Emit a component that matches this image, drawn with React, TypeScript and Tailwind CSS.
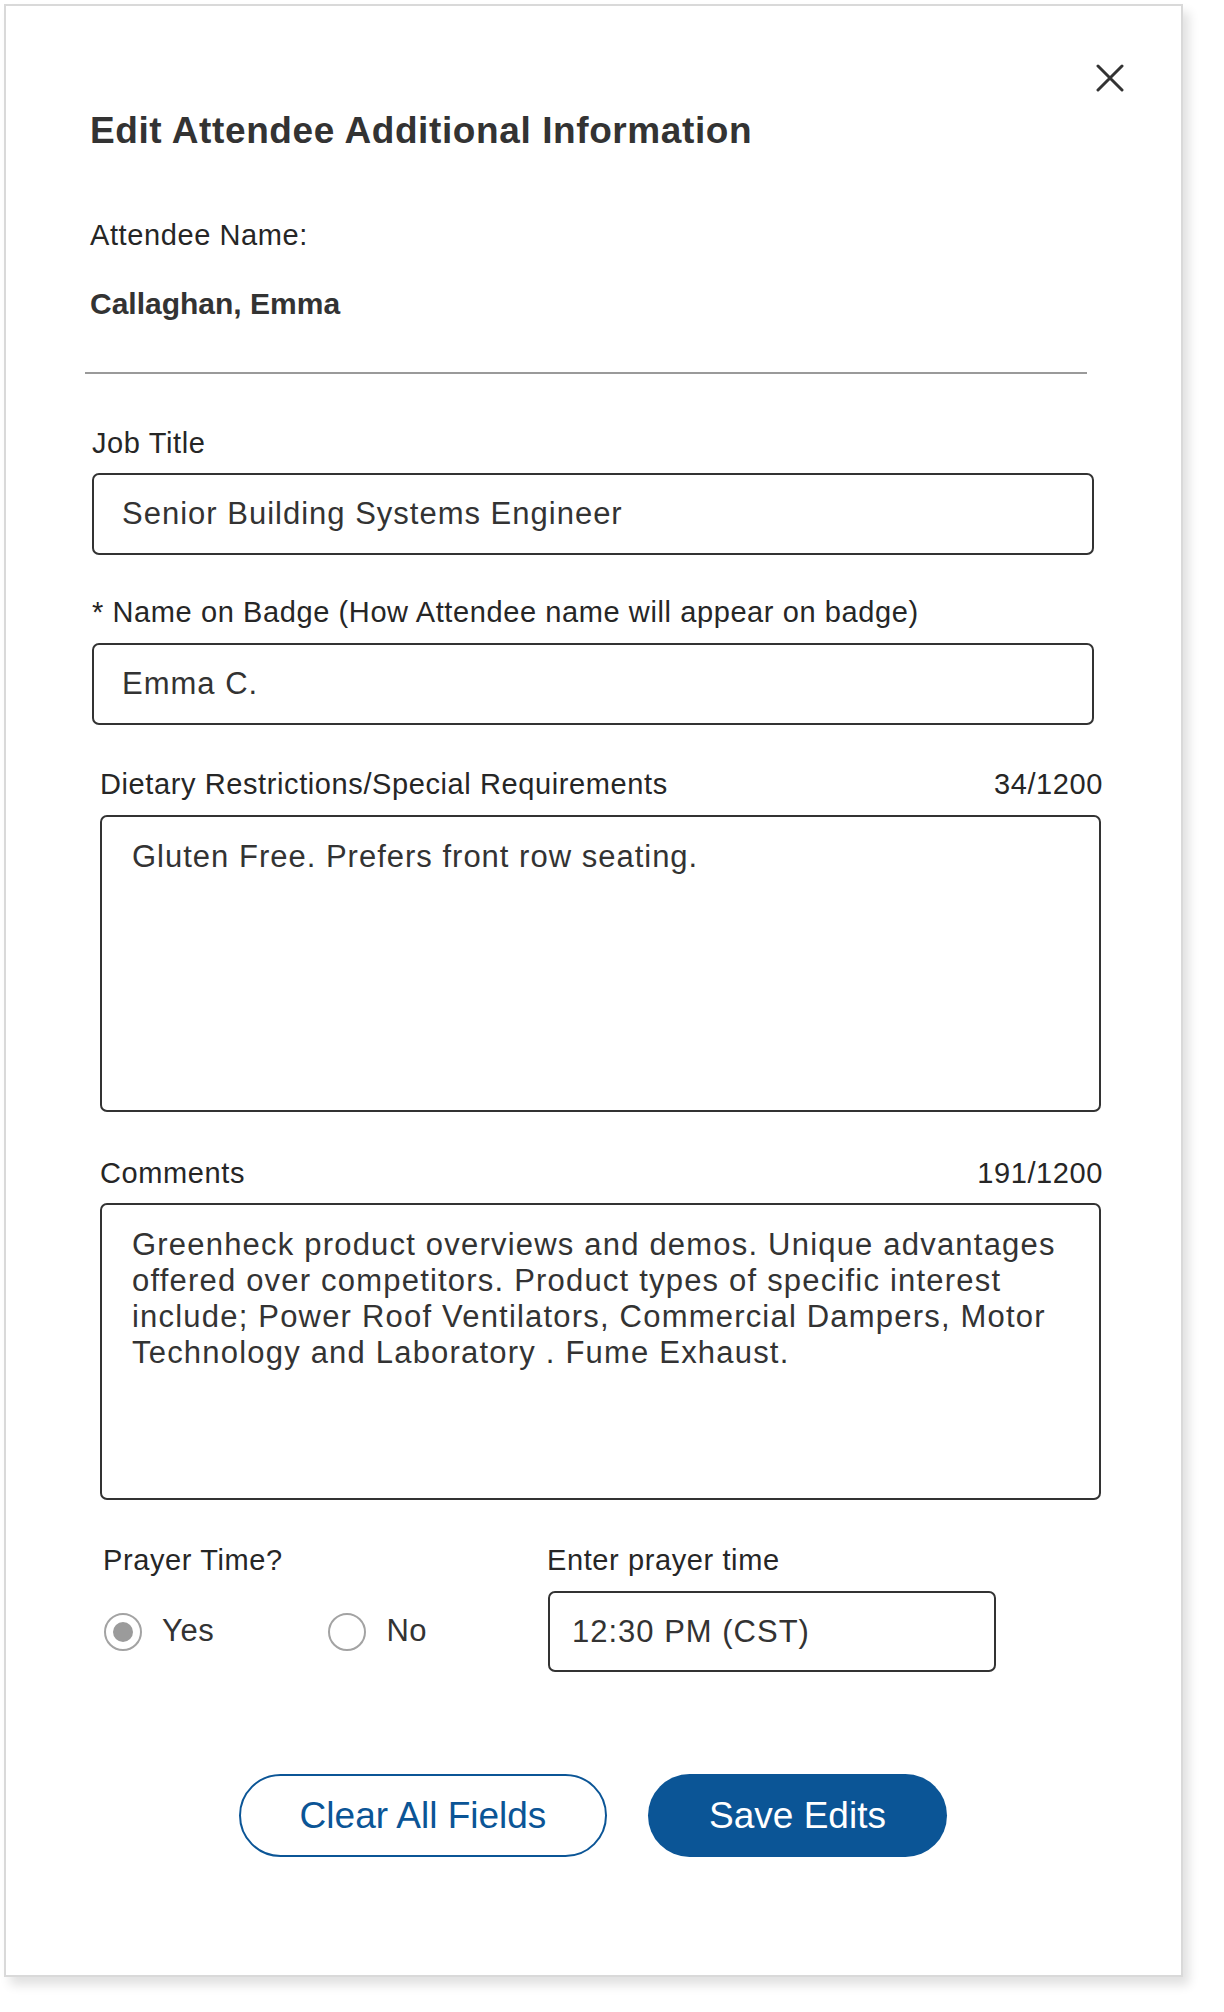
import { useState } from 'react';

function CloseIcon() {
  return (
    <svg width="28" height="28" viewBox="0 0 28 28" fill="none">
      <path d="M2 2 L26 26 M26 2 L2 26" stroke="#333333" strokeWidth="3" strokeLinecap="round" />
    </svg>
  );
}

function Radio({ checked, label, onClick }: { checked: boolean; label: string; onClick: () => void }) {
  return (
    <button type="button" onClick={onClick} className="flex items-center gap-[20px]">
      <span className="flex h-[38px] w-[38px] items-center justify-center rounded-full border-2 border-[#a3a3a3] bg-white">
        {checked && <span className="h-[20px] w-[20px] rounded-full bg-[#9b9b9b]" />}
      </span>
      <span className="text-[31px] tracking-[0.6px] text-[#333333]">{label}</span>
    </button>
  );
}

function App() {
  const [prayer, setPrayer] = useState<'yes' | 'no'>('yes');
  const [jobTitle, setJobTitle] = useState('Senior Building Systems Engineer');
  const [badge, setBadge] = useState('Emma C.');
  const [dietary, setDietary] = useState('Gluten Free. Prefers front row seating.');
  const [comments, setComments] = useState(
    'Greenheck product overviews and demos. Unique advantages offered over competitors. Product types of specific interest include; Power Roof Ventilators, Commercial Dampers, Motor Technology and Laboratory . Fume Exhaust.'
  );
  const [time, setTime] = useState('12:30 PM (CST)');

  const labelCls = 'text-[29px] leading-[34px] tracking-[0.6px] text-[#262626]';
  const inputCls =
    'h-[82px] w-[1002px] rounded-[7px] border-2 border-[#333333] px-[28px] text-[31px] tracking-[1px] text-[#333333] outline-none';
  const areaCls =
    'h-[297px] w-[1001px] resize-none rounded-[7px] border-2 border-[#333333] pl-[30px] pr-[30px] pt-[22px] text-[31px] leading-[36px] text-[#333333] outline-none';

  return (
    <div className="min-h-screen bg-white" style={{ fontFamily: '"Liberation Sans", Arial, sans-serif' }}>
      <div className="ml-[4px] mt-[4px] flex h-[1973px] w-[1179px] flex-col border-2 border-[#d9d9d9] bg-white pl-[84px] shadow-[6px_8px_10px_rgba(0,0,0,0.12)]">
        {/* Close */}
        <div className="flex justify-end pr-[57px] pt-[58px]">
          <button type="button" aria-label="Close">
            <CloseIcon />
          </button>
        </div>

        {/* Header */}
        <h1 className="mt-[18px] text-[37px] font-bold leading-[42px] tracking-[0.6px] text-[#333333]">
          Edit Attendee Additional Information
        </h1>
        <p className={`mt-[66px] ${labelCls}`}>Attendee Name:</p>
        <p className="mt-[35px] text-[30px] font-bold leading-[34px] text-[#333333]">Callaghan, Emma</p>
        <div className="-ml-[5px] mt-[51px] h-[2px] w-[1002px] bg-[#9a9a9a]" />

        {/* Job title */}
        <label className={`ml-[2px] mt-[52px] ${labelCls}`}>Job Title</label>
        <input
          value={jobTitle}
          onChange={(e) => setJobTitle(e.target.value)}
          className={`ml-[2px] mt-[13px] ${inputCls}`}
        />

        <label className={`ml-[2px] mt-[40px] ${labelCls}`}>
          * Name on Badge (How Attendee name will appear on badge)
        </label>
        <input
          value={badge}
          onChange={(e) => setBadge(e.target.value)}
          className={`ml-[2px] mt-[14px] ${inputCls}`}
        />

        {/* Dietary */}
        <div className={`ml-[10px] mt-[42px] flex w-[1003px] justify-between ${labelCls}`}>
          <span>Dietary Restrictions/Special Requirements</span>
          <span>34/1200</span>
        </div>
        <textarea
          value={dietary}
          onChange={(e) => setDietary(e.target.value)}
          className={`ml-[10px] mt-[14px] tracking-[1px] ${areaCls}`}
        />

        {/* Comments */}
        <div className={`ml-[10px] mt-[44px] flex w-[1003px] justify-between ${labelCls}`}>
          <span>Comments</span>
          <span>191/1200</span>
        </div>
        <textarea
          value={comments}
          onChange={(e) => setComments(e.target.value)}
          className={`ml-[10px] mt-[13px] tracking-[1.2px] ${areaCls}`}
        />

        {/* Prayer */}
        <div className="ml-[13px] mt-[43px] flex">
          <div className="flex w-[444px] flex-col">
            <span className={labelCls}>Prayer Time?</span>
            <div className="mt-[14px] flex h-[81px] items-center gap-[114px] pl-[1px]">
              <Radio checked={prayer === 'yes'} label="Yes" onClick={() => setPrayer('yes')} />
              <Radio checked={prayer === 'no'} label="No" onClick={() => setPrayer('no')} />
            </div>
          </div>
          <div className="flex flex-col">
            <span className={labelCls}>Enter prayer time</span>
            <input
              value={time}
              onChange={(e) => setTime(e.target.value)}
              className="ml-[1px] mt-[14px] h-[81px] w-[448px] rounded-[7px] border-2 border-[#333333] px-[22px] text-[31px] tracking-[1px] text-[#333333] outline-none"
            />
          </div>
        </div>

        {/* Actions */}
        <div className="ml-[149px] mt-[102px] flex gap-[41px]">
          <button
            type="button"
            className="h-[83px] w-[368px] rounded-full border-2 border-[#0b5596] text-[37px] text-[#0b5596]"
          >
            Clear All Fields
          </button>
          <button
            type="button"
            className="h-[83px] w-[299px] rounded-full bg-[#0b5596] text-[37px] text-white"
          >
            Save Edits
          </button>
        </div>
      </div>
    </div>
  );
}

export default App;
